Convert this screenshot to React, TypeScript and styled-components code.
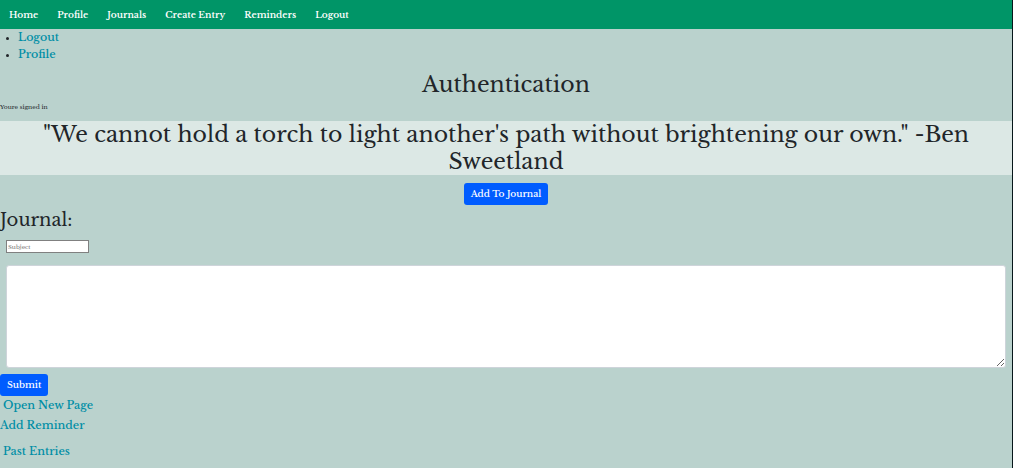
import React from "react";
import styled, { createGlobalStyle } from "styled-components";

const GlobalStyle = createGlobalStyle`
  * { box-sizing: border-box; }
  body {
    margin: 0;
    min-height: 100vh;
    background: #bad2cd;
    color: #212529;
    font-family: "Libre Baskerville", "Liberation Serif", serif;
    font-size: 11px;
    line-height: 17px;
    border-right: 1px solid #07171a;
  }
`;

const Nav = styled.nav`
  display: flex;
  gap: 19px;
  padding: 6px 9px;
  background: #009567;
`;

const NavLink = styled.a`
  color: #fff;
  font-size: 9px;
  font-weight: 600;
  line-height: 17px;
  text-decoration: none;
`;

const LinkList = styled.ul`
  margin: 0;
  padding: 0 0 0 18px;

  li::marker {
    font-size: 8px;
  }
`;

const TextLink = styled.a`
  color: #008ea6;
  font-size: 11px;
  font-weight: 500;
  text-decoration: none;
`;

const Title = styled.h1`
  margin: 8px 0 4px;
  text-align: center;
  font-size: 22px;
  font-weight: 400;
  line-height: 27px;
`;

const Note = styled.p`
  margin: 0 0 8px;
  font-size: 6px;
  line-height: 11px;
`;

const Quote = styled.h1`
  margin: 0 0 8px;
  padding: 0 32px;
  background: #dce8e5;
  text-align: center;
  font-size: 22px;
  font-weight: 450;
  line-height: 27px;
`;

const Heading = styled.h2`
  margin: 3px 0 8px;
  font-size: 18px;
  font-weight: 400;
  line-height: 24px;
`;

const Center = styled.div`
  display: flex;
  justify-content: center;
`;

const Button = styled.button`
  display: block;
  padding: 2px 7px 3px;
  border: 0;
  border-radius: 3px;
  background: #005cff;
  color: #fff;
  font-family: inherit;
  font-size: 9px;
  font-weight: 500;
  line-height: 17px;
`;

const Fields = styled.div`
  display: flex;
  flex-direction: column;
  align-items: flex-start;
  gap: 12px;
  margin: 0 6px 6px;
`;

const Subject = styled.input`
  width: 83px;
  height: 13px;
  padding: 0 1px;
  border: 1px solid #808080;
  border-radius: 0;
  background: #fff;
  color: #212529;
  font-family: inherit;
  font-size: 6px;

  &::placeholder {
    color: #757575;
  }
`;

const Entry = styled.textarea`
  width: 100%;
  height: 103px;
  padding: 4px 7px;
  border: 1px solid #ced4da;
  border-radius: 3px;
  background: #fff;
  font-family: inherit;
  font-size: 9px;
  resize: vertical;
`;

const Actions = styled.div`
  display: flex;
  flex-direction: column;
  align-items: flex-start;
`;

const ActionLink = styled(TextLink)<{ $inset?: boolean }>`
  padding: ${(p) => (p.$inset ? "1px 3px 2px" : "1px 0 8px")};
`;

const pages = ["Home", "Profile", "Journals", "Create Entry", "Reminders", "Logout"];

export default function App() {
  return (
    <>
      <GlobalStyle />
      <Nav>
        {pages.map((page) => (
          <NavLink href="#" key={page}>{page}</NavLink>
        ))}
      </Nav>
      <LinkList>
        <li><TextLink href="#">Logout</TextLink></li>
        <li><TextLink href="#">Profile</TextLink></li>
      </LinkList>
      <Title>Authentication</Title>
      <Note>Youre signed in</Note>
      <Quote>"We cannot hold a torch to light another's path without brightening our own." -Ben Sweetland</Quote>
      <Center><Button type="button">Add To Journal</Button></Center>
      <form>
        <Heading>Journal:</Heading>
        <Fields>
          <Subject aria-label="Subject" placeholder="Subject" />
          <Entry aria-label="Journal entry" />
        </Fields>
        <Button type="button">Submit</Button>
      </form>
      <Actions>
        <ActionLink href="#" $inset>Open New Page</ActionLink>
        <ActionLink href="#">Add Reminder</ActionLink>
        <ActionLink href="#" $inset>Past Entries</ActionLink>
      </Actions>
    </>
  );
}
